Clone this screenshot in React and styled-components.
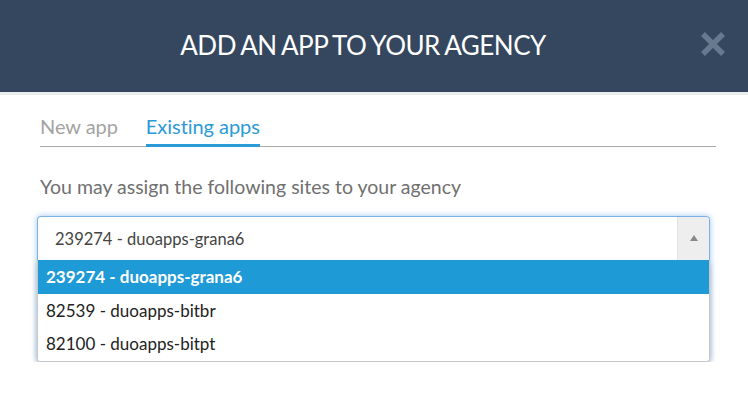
import { useState } from "react";
import styled, { createGlobalStyle } from "styled-components";

const GlobalStyle = createGlobalStyle`
  body {
    margin: 0;
    background: #fff;
    font-family: Lato, "Open Sans", sans-serif;
  }
`;

const Header = styled.div`
  height: 92px;
  background: #34475e;
  border-bottom: 3px solid #e8ecf1;
  display: flex;
  align-items: center;
  justify-content: center;
  padding-right: 22px;
  position: relative;
`;

const Title = styled.h1`
  margin: 0;
  color: #fff;
  font-size: 26px;
  font-weight: 400;
  letter-spacing: -0.5px;
  word-spacing: -1px;
  padding-bottom: 2px;
`;

const Close = styled.button`
  position: absolute;
  right: 21px;
  top: 30px;
  width: 28px;
  height: 28px;
  padding: 0;
  border: 0;
  background: none;
  cursor: pointer;
`;

const Body = styled.div`
  padding: 15px 32px 0 37px;
`;

const Tabs = styled.div`
  display: flex;
  gap: 28px;
  margin-left: 3px;
  border-bottom: 1px solid #aaa;
`;

const Tab = styled.div`
  font-size: 20px;
  padding: 4px 0 6px;
  color: ${(p) => (p.$active ? "#2b9ad6" : "#a3a3a3")};
  border-bottom: 3px solid ${(p) => (p.$active ? "#2b9ad6" : "transparent")};
  margin-bottom: -1px;
  cursor: pointer;
  letter-spacing: -0.05px;
`;

const Hint = styled.p`
  margin: 28px 0 18px 3px;
  font-size: 19.5px;
  color: #707070;
`;

const Select = styled.div`
  width: 673px;
  border-radius: 4px;
  box-shadow: 0 0 6px rgba(91, 160, 225, 0.6);
`;

const Control = styled.div`
  height: 43px;
  display: flex;
  align-items: stretch;
  border: 1px solid #7ab0e6;
  border-bottom: 0;
  border-radius: 4px 4px 0 0;
  background: #fff;
`;

const Value = styled.div`
  flex: 1;
  display: flex;
  align-items: center;
  padding-left: 17px;
  font-size: 16.5px;
  color: #444;
`;

const Arrow = styled.div`
  width: 31px;
  background: #eeeeee;
  border-left: 1px solid #e2e2e2;
  border-top-right-radius: 4px;
  display: flex;
  align-items: center;
  justify-content: center;
  &::after {
    content: "";
    border-left: 4px solid transparent;
    border-right: 4px solid transparent;
    border-bottom: 6px solid #888;
    margin-top: -2px;
  }
`;

const Menu = styled.div`
  border: 1px solid #c8c8c8;
  border-top: 0;
  border-radius: 0 0 4px 4px;
  background: #fff;
  box-shadow: 0 3px 6px rgba(0, 0, 0, 0.18);
  overflow: hidden;
`;

const Option = styled.div`
  height: 33.5px;
  display: flex;
  align-items: center;
  padding-left: 8px;
  font-size: 17px;
  color: ${(p) => (p.$selected ? "#fff" : "#222")};
  background: ${(p) => (p.$selected ? "#1e9ad6" : "#fff")};
  font-weight: ${(p) => (p.$selected ? 700 : 400)};
  cursor: pointer;
`;

const sites = [
  { id: 239274, name: "duoapps-grana6" },
  { id: 82539, name: "duoapps-bitbr" },
  { id: 82100, name: "duoapps-bitpt" },
];

export default function App() {
  const [tab, setTab] = useState("existing");
  const [selected, setSelected] = useState(sites[0].id);
  const current = sites.find((s) => s.id === selected);

  return (
    <>
      <GlobalStyle />
      <Header>
        <Title>ADD AN APP TO YOUR AGENCY</Title>
        <Close aria-label="Close">
          <svg width="28" height="28" viewBox="0 0 28 28">
            <path
              d="M4 4 L24 24 M24 4 L4 24"
              stroke="#67798e"
              strokeWidth="5.5"
              strokeLinecap="butt"
            />
          </svg>
        </Close>
      </Header>
      <Body>
        <Tabs>
          <Tab $active={tab === "new"} onClick={() => setTab("new")}>
            New app
          </Tab>
          <Tab $active={tab === "existing"} onClick={() => setTab("existing")}>
            Existing apps
          </Tab>
        </Tabs>
        <Hint>You may assign the following sites to your agency</Hint>
        <Select>
          <Control>
            <Value>
              {current.id} - {current.name}
            </Value>
            <Arrow />
          </Control>
          <Menu>
            {sites.map((site) => (
              <Option
                key={site.id}
                $selected={site.id === selected}
                onClick={() => setSelected(site.id)}
              >
                {site.id} - {site.name}
              </Option>
            ))}
          </Menu>
        </Select>
      </Body>
    </>
  );
}
